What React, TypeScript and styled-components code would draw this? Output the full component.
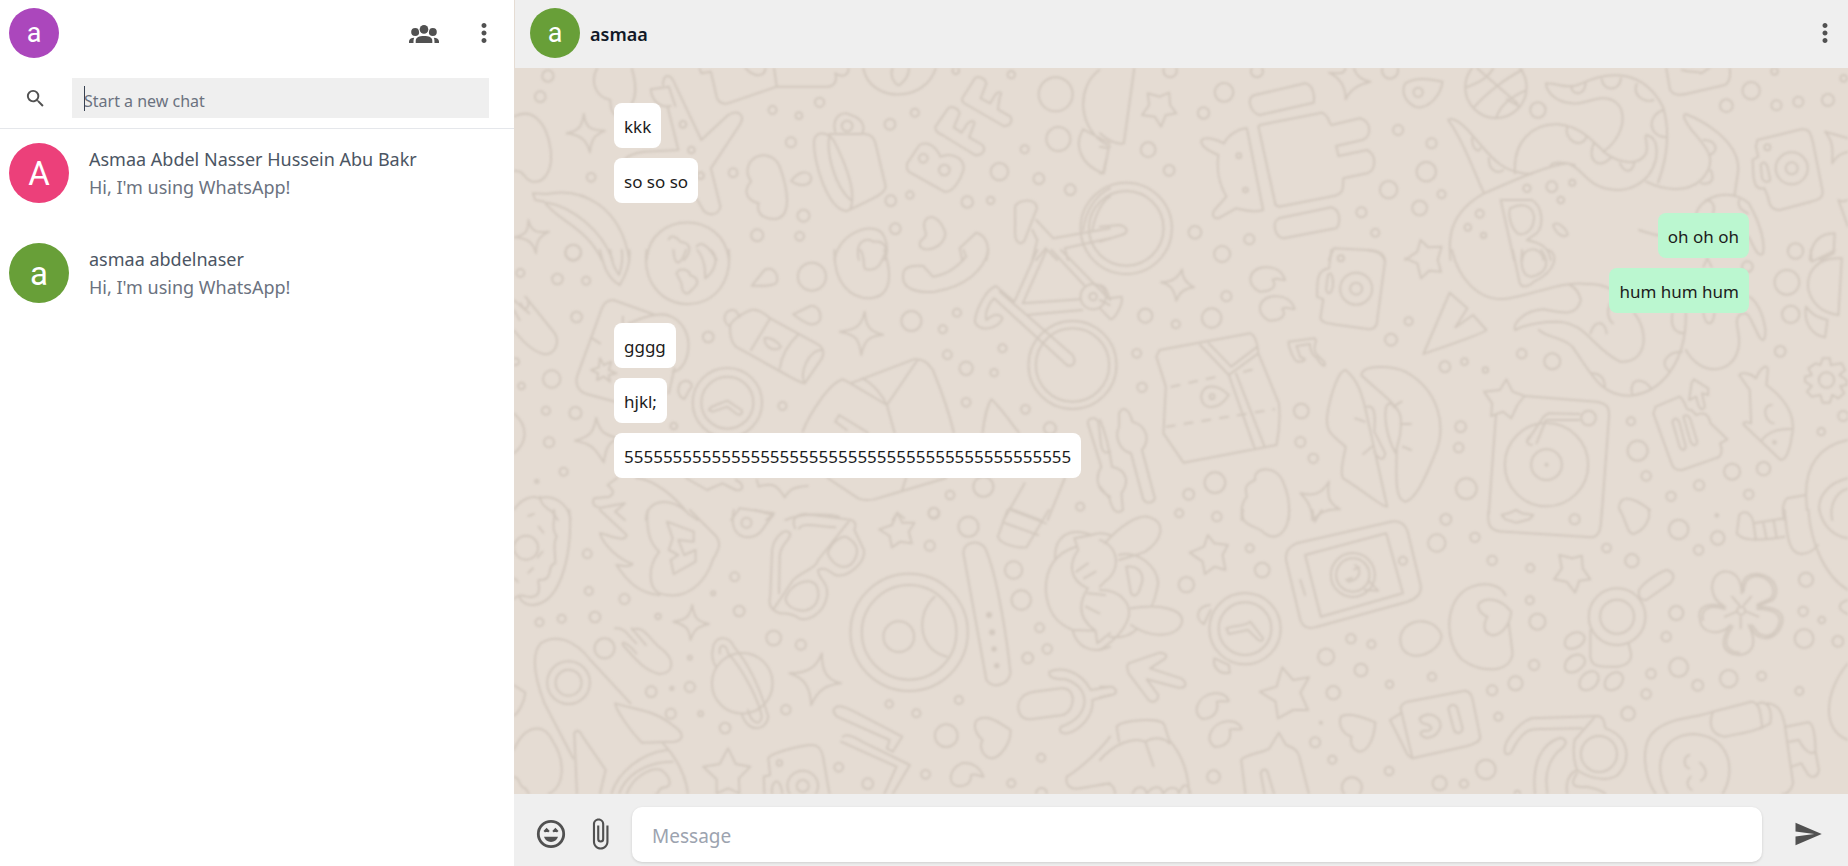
import React, { useId } from 'react';
import styled, { createGlobalStyle } from 'styled-components';
import { MdAttachFile, MdMoreVert, MdSearch, MdSend } from 'react-icons/md';

const GlobalStyle = createGlobalStyle`
  *, *::before, *::after { box-sizing: border-box; }
  body {
    margin: 0;
    font-family: 'Noto Sans', 'Open Sans', sans-serif;
    color: #111827;
    background: #ffffff;
  }
  h1, h2, p, ul { margin: 0; padding: 0; }
`;

const Page = styled.div`
  display: flex;
  height: 100vh;
  overflow: hidden;
`;

const Sidebar = styled.aside`
  flex: 0 0 514px;
  display: flex;
  flex-direction: column;
  background: #ffffff;
`;

const SidebarHeader = styled.header`
  display: flex;
  align-items: center;
  justify-content: space-between;
  height: 68px;
  padding: 8px 15px 10px 9px;
`;

const Actions = styled.div`
  display: flex;
  align-items: center;
  gap: 30px;
`;

const Avatar = styled.span<{ $size: number; $color: string }>`
  flex: none;
  display: flex;
  align-items: center;
  justify-content: center;
  width: ${(p) => p.$size}px;
  height: ${(p) => p.$size}px;
  border-radius: 50%;
  background: ${(p) => p.$color};
  color: #ffffff;
  font-family: Roboto, sans-serif;
  font-weight: 400;
  font-size: ${(p) => (p.$size > 50 ? 33 : 27)}px;
  line-height: 1;
`;

const IconButton = styled.button`
  flex: none;
  display: flex;
  padding: 0;
  border: 0;
  background: none;
  color: #515151;
  cursor: pointer;
`;

const SearchForm = styled.form`
  display: flex;
  align-items: center;
  padding: 10px 25px 10px 24px;
  border-bottom: 1px solid #e5e7eb;
`;

const SearchField = styled.div`
  position: relative;
  flex: 1;
  min-width: 0;
  display: flex;
  margin-left: 25px;
  &::before {
    content: '';
    position: absolute;
    left: 12px;
    top: 8px;
    width: 1px;
    height: 25px;
    background: #374151;
  }
`;

const SearchInput = styled.input`
  flex: 1;
  min-width: 0;
  height: 40px;
  padding: 5px 12px 0;
  border: 0;
  outline: 0;
  background: #efefef;
  color: #374151;
  caret-color: transparent;
  font: 16px 'Noto Sans', 'Open Sans', sans-serif;
  &::placeholder { color: #6b7280; opacity: 1; }
`;

const ContactList = styled.ul`
  list-style: none;
`;

const Contact = styled.li`
  display: flex;
  align-items: center;
  gap: 20px;
  height: 100px;
  padding: 0 9px 12px;
`;

const ContactName = styled.h2`
  font-size: 18px;
  line-height: 28px;
  font-weight: 400;
  color: #4b5563;
`;

const ContactStatus = styled.p`
  font-size: 18px;
  line-height: 28px;
  color: #6b7280;
`;

const Chat = styled.main`
  flex: 1;
  min-width: 0;
  display: flex;
  flex-direction: column;
  background: #e5dcd3;
`;

const ChatHeader = styled.header`
  display: flex;
  align-items: center;
  gap: 10px;
  height: 68px;
  margin-left: 1px;
  padding: 0 8px 2px 15px;
  background: #efefef;
`;

const ChatTitle = styled.h1`
  flex: 1;
  padding-top: 2px;
  font-size: 18px;
  line-height: 28px;
  font-weight: 600;
`;

const Thread = styled.section`
  position: relative;
  flex: 1;
  min-height: 0;
  overflow: hidden;
`;

const Wallpaper = styled.svg`
  position: absolute;
  inset: 0;
  width: 100%;
  height: 100%;
  fill: none;
  stroke: #d3c9bf;
  stroke-width: 2;
  stroke-linejoin: round;
  stroke-linecap: round;
  filter: blur(1px);
`;

const Messages = styled.ul`
  position: relative;
  display: flex;
  flex-direction: column;
  gap: 10px;
  padding: 35px 99px 35px 100px;
  list-style: none;
`;

const Bubble = styled.li<{ $mine?: boolean }>`
  align-self: ${(p) => (p.$mine ? 'flex-end' : 'flex-start')};
  padding: 10px 10px 7px;
  border-radius: 8px;
  background: ${(p) => (p.$mine ? '#bbf7d0' : '#ffffff')};
  color: #1c1c1c;
  font-size: 17px;
  line-height: 28px;
`;

const Composer = styled.form`
  display: flex;
  align-items: center;
  padding: 8px 25px 0 20px;
  height: 72px;
  background: #efefef;
`;

const AttachButton = styled(IconButton)`
  margin: 0 15px;
`;

const MessageInput = styled.input`
  flex: 1;
  min-width: 0;
  height: 55px;
  margin: 9px 31px 8px 0;
  padding: 2px 20px 0;
  border: 0;
  border-radius: 10px;
  outline: 0;
  background: #ffffff;
  box-shadow: 0 1px 3px rgba(0, 0, 0, 0.14);
  color: #111827;
  font: 19px 'Noto Sans', 'Open Sans', sans-serif;
  &::placeholder { color: #9ca3af; opacity: 1; }
`;

function GroupIcon() {
  return (
    <svg width="30" height="30" viewBox="0 0 30 30" fill="currentColor" aria-hidden="true">
      <circle cx="6.2" cy="14" r="4" />
      <circle cx="23.8" cy="14" r="4" />
      <circle cx="15" cy="11.4" r="5.4" fill="#ffffff" />
      <circle cx="15" cy="11.4" r="4.3" />
      <path d="M6.7 25v-2.2C6.7 19.4 10.4 18 15 18s8.3 1.4 8.3 4.8V25z" />
      <path d="M0 25v-1.6c0-2.3 2.1-3.6 5.2-3.7C4.6 21 4.5 22.2 4.5 25zM30 25v-1.6c0-2.3-2.1-3.6-5.2-3.7.6 1.3.7 2.5.7 5.3z" />
    </svg>
  );
}

function LaughIcon() {
  return (
    <svg width="34" height="34" viewBox="0 0 34 34" fill="currentColor" aria-hidden="true">
      <circle cx="17" cy="17" r="12.7" fill="none" stroke="currentColor" strokeWidth="2.8" />
      <path d="M10 19.8h14c-.9 3-3.6 5.1-7 5.1s-6.1-2.1-7-5.1z" />
      <path
        d="M10.3 14.8l2.3-2.4 2.3 2.4M19.1 14.8l2.3-2.4 2.3 2.4"
        fill="none"
        stroke="currentColor"
        strokeWidth="2.2"
      />
    </svg>
  );
}

type Dot = [number, number, number];

interface Tile {
  x: number;
  y: number;
  sx: number;
  sy: number;
  rings: Dot[];
  lines: string;
  dashes?: string;
}

// The doodle wallpaper, split in six tiles that each have their own scale.
const tiles: Tile[] = [
  {
    x: 510, y: 0, sx: 2.6133, sy: 3,
    rings: [[99,228,21],[79,290,20],[452,373,14],[474,450,14],[212,532,17],[165,757,27],[686,330,16],[755,347,14],[809,307,18],[734,427,19],[583,518,17],[498,527,14],[1058,338,16],[993,373,20],[995,602,20],[1045,585,15],[767,647,22],[646,706,22],[757,709,17],[1007,686,20],[1345,448,16],[1279,515,30],[1382,536,20],[1464,569,20],[1195,606,21],[1256,601,15],[1310,224,15],[1426,283,55],[1433,417,40],[1165,212,14],[881,378,20],[1080,475,17],[1135,510,20]],
    lines: `M10 350C60 320 95 370 105 440C115 510 90 550 60 545C35 540 40 510 10 512
      M193 342C198 385 210 390 248 392C220 405 212 420 209 457C200 420 185 405 148 400C180 392 188 380 193 342Z
      M48 660C55 695 70 700 102 695C75 710 68 725 68 760C60 725 45 715 12 712C40 705 48 695 48 660Z
      M60 580L95 582C190 560 290 620 312 780M60 580L66 600L90 605C120 660 200 680 240 780M98 608C160 620 240 690 268 780
      M228 204C210 240 220 290 262 300C262 340 275 350 290 350M318 204C330 250 330 290 318 310
      M368 268L415 260L432 318M368 268C370 300 390 325 420 318M400 255C400 220 420 220 430 250L500 420L570 345C600 325 615 350 600 375L525 505L550 620C545 650 510 650 500 620L485 590M412 320L440 450L350 455C320 460 305 470 300 478
      M495 204L500 220L525 215L540 290C545 310 560 315 575 308L697 260L690 204M697 260H830C850 258 855 240 850 220C870 235 885 225 885 204M615 204C640 235 665 230 668 204
      M923 204C940 310 1085 310 1113 204M1000 204C990 230 1010 260 1018 255C1030 245 1045 225 1042 204
      M850 395C840 350 870 330 890 345C920 355 930 380 920 400C945 405 950 410 955 430L982 560C980 580 960 590 880 633C830 630 790 480 795 420C800 390 835 395 850 430C880 500 905 580 890 625M835 405C825 460 850 560 890 600M835 402H920
      M735 543C755 510 785 510 787 535C785 560 755 560 735 543Z
      M628 485C650 455 690 460 705 500C730 580 735 655 690 657C650 655 645 630 650 610C615 600 610 570 630 545C615 520 620 500 628 485Z
      M1215 235L1182 295C1180 305 1185 310 1195 315L1290 378C1305 380 1315 365 1308 350L1275 328L1280 290C1290 275 1275 270 1265 290L1255 310L1230 295L1245 250C1240 230 1220 228 1215 235Z
      M1145 325L1112 380C1110 395 1120 400 1130 405L1215 465C1235 468 1245 450 1235 435L1200 412L1212 375C1220 360 1200 358 1190 380L1180 398L1160 382L1175 340C1170 320 1150 318 1145 325Z
      M1070 435L1038 490C1035 510 1040 515 1050 520L1135 575C1160 580 1180 530 1185 510C1190 480 1160 455 1125 470C1110 430 1085 425 1070 435Z
      M1540 210C1480 260 1480 390 1568 440M1498 388L1568 430M1498 388C1475 430 1485 490 1550 520L1558 480
      M357 780C365 630 560 630 572 780M415 718C420 700 440 715 445 725C480 730 470 760 455 780M488 740C500 720 520 740 540 780
      M848 780C860 690 960 660 978 710C990 740 985 770 978 780M912 780C900 725 930 710 950 725C975 720 985 740 983 760
      M1090 655C1110 640 1130 670 1138 700C1135 740 1090 760 1072 740C1065 715 1090 720 1087 700C1080 680 1080 665 1090 655Z
      M1175 745L1218 698C1245 705 1255 740 1245 780M1175 745L1182 780
      M1320 620C1325 600 1375 590 1377 625L1345 720C1340 735 1320 735 1320 700ZM1375 660L1420 715L1568 685M1365 690L1378 720L1365 780M1450 745L1568 715M1450 745L1458 780M1400 745L1375 780M1400 745L1430 780M1498 690C1505 620 1540 580 1568 565M1522 690C1530 640 1550 600 1568 590`,
  },
  {
    x: 510, y: 250, sx: 2.6133, sy: 3,
    rings: [[165,8,28],[27,69,16],[124,87,20],[199,92,16],[174,201,20],[109,387,30],[30,408,14],[15,335,14],[94,482,16],[171,489,22],[102,577,19],[140,665,16],[70,694,9],[428,528,14],[518,261,20],[789,80,46],[712,468,16],[1049,213,34],[1131,238,16],[1168,188,16],[1287,295,16],[1143,314,17],[1192,355,24],[1265,368,15],[1192,457,17],[1347,478,17],[1411,535,22],[1237,710,34],[1150,735,17],[1107,788,19],[1490,770,16],[568,458,108],[568,458,82],[1524,140,15],[1524,140,42],[1470,345,136],[1470,345,114]],
    lines: `M235 0C245 50 255 85 287 105C305 70 315 30 312 0M262 0C265 40 275 60 285 75C292 50 295 20 292 0
      M357 0C345 100 400 162 465 162C540 160 580 90 572 0M427 0C430 50 445 50 460 0M435 70C445 50 470 60 470 75C495 85 495 100 475 120C460 140 450 130 448 100ZM490 0C510 30 510 60 510 85C540 60 545 20 525 0
      M632 107L665 60C690 45 705 80 695 100C680 110 660 108 632 107Z
      M740 193L785 168C805 165 815 190 810 210C795 235 770 220 740 193Z
      M848 0C845 100 890 145 940 145C1000 140 998 70 978 0M915 0C930 20 920 55 930 58C960 65 970 40 978 15
      M1028 70C1030 50 1050 45 1080 48L1105 80C1140 75 1170 50 1192 20L1185 0M1028 70C1020 115 1060 130 1110 125C1190 110 1240 60 1250 0
      M1378 0L1318 155L1270 108C1240 120 1215 190 1215 215C1225 250 1280 235 1287 205C1275 180 1250 205 1245 210C1240 190 1250 160 1265 145L1455 345C1475 355 1480 330 1470 315L1280 125M1402 0L1340 160L1490 148M1415 0L1500 105M1440 0L1568 150M1350 195L1495 180M1350 195L1400 245
      M927 185C930 230 940 245 975 254C935 258 925 275 918 315C912 265 905 255 862 245C905 240 920 225 927 185Z
      M575 230C575 215 600 195 625 182C640 175 660 185 680 205L800 280C820 290 822 310 815 325L770 400C750 395 740 385 700 360L590 290C575 270 575 250 575 230ZM575 230C550 215 560 170 590 182L600 200M680 205L630 300M752 255C725 285 710 315 705 355M815 300C780 300 755 370 770 400M665 265C680 260 700 275 708 290C700 305 665 300 665 265Z
      M40 140L110 240C135 270 120 315 90 313C60 305 30 270 10 240M45 145C55 165 40 195 28 160M10 180L25 210M10 150L50 190
      M270 150C255 150 245 160 240 175L175 380C170 405 180 425 200 432L290 460M270 150L380 195C440 180 490 260 455 340C445 360 435 365 425 365M380 195C340 200 320 220 310 219M430 354L415 430M295 200V220M215 265L235 280
      M235 325L245 345L265 335L258 360L278 370L258 375L262 395L245 380L228 390L230 370L212 360L232 352Z
      M10 490C50 530 45 580 10 610
      M225 503C235 545 245 555 285 565C255 575 250 600 245 637C225 600 215 580 170 572C210 560 220 545 225 503Z
      M445 400C460 385 475 395 475 410C460 430 460 445 455 447C440 440 435 420 445 400
      M520 480C520 470 540 465 568 452L605 480C610 490 600 500 590 490L568 470L530 485Z
      M765 545C775 510 830 400 870 388L890 400L1055 328C1085 325 1095 345 1105 360C1130 430 1150 500 1160 548M890 400L985 465L1065 330M985 465L1005 548M920 385C950 400 975 440 985 465M850 515L860 495L935 548M880 540L850 515M830 684L910 745C930 755 950 750 970 742L1140 684M1035 684L1025 720
      M1235 548C1240 500 1250 460 1258 448C1280 470 1310 520 1330 548
      M1568 605C1540 620 1545 570 1538 520C1535 500 1510 500 1510 520L1545 650C1530 680 1530 720 1568 740
      M280 684L255 705C270 720 275 730 260 740L220 745C210 765 230 780 250 770L300 760L275 785L300 810M330 684C380 690 430 740 465 790M355 810C355 750 420 735 465 790L490 810
      M460 684L515 720L555 700L590 720C615 725 610 700 590 690M645 690L650 710C690 695 700 710 718 742C730 720 740 710 778 708
      M10 780C30 745 60 735 75 745C120 730 155 770 158 810M78 740C80 760 90 770 110 785L125 810
      M578 810L600 775L690 790L670 810M720 810C760 790 830 790 860 800M1000 810L1012 788L1030 805M1305 775L1385 810M1345 700L1290 810M1450 684L1405 810`,
  },
  {
    x: 510, y: 510, sx: 2.6133, sy: 3,
    rings: [[202,131,17],[206,243,16],[299,267,19],[135,326,16],[77,337,16],[222,321,20],[247,415,34],[387,319,12],[587,200,17],[531,250,10],[599,303,20],[689,384,26],[760,404,19],[369,545,20],[423,535,9],[470,531,19],[470,443,10],[420,611,19],[498,611,11],[562,654,20],[721,599,18],[1097,107,19],[1108,10,20],[1198,50,34],[1316,180,30],[1336,270,33],[1384,353,17],[1404,417,18],[1353,444,20],[991,582,15],[1062,610,16],[1173,570,16],[1140,677,38],[1388,743,16],[1310,820,16],[1086,793,17],[935,821,20],[859,772,17],[704,759,12],[1389,850,20],[1252,315,10],[1260,367,10],[1265,417,9],[1272,467,9],[1252,315,4],[1260,367,4],[1265,417,4],[1272,467,4],[153,518,68],[153,518,43],[1043,367,180],[1043,367,146],[1016,380,50],[42,113,40],[618,38,19],[607,520,95],[765,828,50],[765,828,22]],
    lines: `M155 0C165 100 140 280 60 285C40 285 30 275 25 262M115 0C120 30 105 50 122 80C110 100 120 130 118 160C95 165 115 210 80 210C65 205 85 240 70 255C50 275 30 240 10 268
      M75 50L87 68M85 125L72 142M60 175L48 188M12 205L20 215M62 12L48 18
      M235 0L305 75C300 100 260 75 235 70C245 110 290 150 320 162C310 175 290 165 278 165C310 220 340 250 390 255
      M360 0C355 60 365 100 390 125C360 170 360 230 390 250C460 275 510 220 530 150C550 110 550 100 540 80L470 0M410 35L480 65V95L440 90L455 135L485 120V155L428 192L420 150L440 135L415 120L425 85Z
      M585 0C575 50 590 80 620 82C660 80 660 50 688 15L640 0
      M745 55C735 30 745 15 770 12L880 28C905 30 905 45 900 60L925 120C930 160 880 205 850 195C830 180 820 170 805 180C805 210 835 215 828 260C820 310 780 335 755 325C740 310 720 310 705 310C680 300 675 280 680 260L685 120C690 80 720 50 732 70C735 90 705 100 705 140L703 250M690 295L740 210C770 180 800 175 805 150L885 35M755 55C765 40 780 45 850 52M720 265C735 220 780 200 800 225C815 260 800 300 765 302C740 300 720 285 720 265ZM830 130C840 95 870 70 885 85C905 100 915 120 900 150C885 180 850 180 830 130Z
      M1012 8L1025 38L1057 38L1042 65L1050 100L1020 95L998 112L992 78L965 58L998 45Z
      M1300 0L1275 80C1280 100 1320 115 1350 112L1408 0M1310 0L1400 40M1290 38L1380 75
      M1425 150C1420 80 1460 50 1520 75C1540 65 1555 70 1568 75M1480 110C1420 130 1400 180 1400 240C1405 310 1430 340 1470 360L1530 362M1520 75L1475 85L1485 120C1460 160 1460 210 1510 235C1480 290 1490 330 1530 362L1535 400L1568 370M1470 360C1480 410 1520 435 1568 410M1480 185L1510 160M1500 205L1530 185M1510 250L1555 255M1505 290L1540 310
      M476 285C482 325 490 335 520 342C490 350 480 360 472 390C468 355 460 345 427 335C460 330 470 320 476 285Z
      M1185 130C1185 90 1230 90 1242 115C1275 200 1300 400 1308 490C1300 530 1260 535 1245 510L1185 130Z
      M1110 260C1060 310 1065 420 1142 440
      M275 355C300 350 310 380 330 400M295 405C290 390 310 400 330 430M320 360C350 340 370 400 400 420C430 450 430 490 390 492C350 480 330 450 295 405M318 355L355 405
      M315 580L210 450C170 390 120 370 80 400C50 440 70 520 90 580L165 745M275 580C275 600 320 670 345 698L430 695C455 690 455 670 430 650C380 600 330 600 275 580ZM175 852L168 670C175 655 185 665 190 680L250 780L235 852M400 700C440 750 460 800 465 852M265 852C280 790 340 730 410 720M285 852C300 800 350 755 425 755M305 852C320 800 370 770 395 780C420 800 425 830 405 832C380 835 395 852 380 852
      M530 420C530 380 570 370 585 410C630 470 660 560 675 620C670 665 620 670 605 610M548 430C545 400 565 400 570 430C610 480 650 570 658 620C655 650 630 640 622 600M530 420C525 440 535 470 540 470
      M815 430C815 480 825 510 865 520C825 525 805 540 787 585C785 540 775 505 730 490C775 490 800 475 815 430Z
      M1220 630C1250 610 1280 640 1308 660C1310 700 1280 745 1258 745C1235 740 1225 710 1235 690C1215 670 1210 645 1220 630Z
      M848 595C860 580 880 595 900 605L1025 680L1000 725L985 715L992 690L855 620C845 610 845 600 848 595ZM870 680C880 668 900 680 920 695L1045 765L1000 852M865 695L1010 770L978 852
      M1340 560C1320 580 1325 630 1360 628L1445 615C1480 600 1480 530 1440 535L1370 545C1355 548 1345 552 1340 560ZM1410 485C1440 470 1490 480 1518 540L1568 530M1410 485C1405 505 1430 508 1450 508C1520 530 1520 620 1440 650C1430 670 1450 675 1470 665C1510 640 1525 600 1522 570L1568 555
      M1455 800C1470 790 1530 740 1568 680M1455 800C1450 830 1470 840 1490 835L1568 820
      M1180 760C1150 775 1140 820 1170 828C1200 830 1205 810 1205 795C1215 790 1230 800 1237 800C1230 775 1210 755 1180 760Z
      M570 715L590 762L628 770L598 805L600 850L570 835L540 850V808L505 770L548 762Z
      M665 852L663 800L680 795L675 745C680 730 760 705 790 705C810 705 815 725 818 740L835 852M685 852C680 815 705 790 712 852
      M10 525L40 548C38 580 20 610 10 618M10 720C40 640 90 640 110 690C145 750 145 830 100 852M10 800C30 805 20 830 40 835L50 852`,
  },
  {
    x: 1100, y: 510, sx: 2.0963, sy: 3,
    rings: [[166,10,16],[245,20,18],[314,115,16],[340,180,26],[181,224,27],[725,28,20],[706,99,30],[786,82,18],[822,151,18],[902,174,16],[1115,152,24],[1062,114,17],[1255,120,18],[1213,58,33],[1295,84,24],[1480,209,25],[995,28,19],[917,335,28],[901,271,16],[1208,309,25],[1187,380,18],[1474,304,18],[1513,330,14],[1476,386,32],[1547,394,20],[1213,472,32],[1155,491,18],[1253,526,20],[1318,506,30],[1387,498,17],[1466,543,16],[526,386,18],[569,403,16],[474,440,28],[547,480,23],[489,548,24],[696,500,16],[607,523,15],[910,465,19],[822,541,19],[871,520,25],[1145,552,18],[1107,611,24],[835,620,16],[451,697,19],[463,638,7],[487,749,16],[606,783,17],[238,800,23],[528,832,34],[809,778,33],[712,820,25],[763,821,16],[875,850,12],[635,152,16],[304,356,111],[304,356,83],[1084,320,89],[1084,320,55],[1046,732,58],[530,195,70],[530,195,54],[1344,302,16]],
    lines: `M10 100C40 50 80 10 105 22C140 40 130 90 95 125C80 135 60 140 40 150M0 90C40 110 45 180 10 215L0 230M40 135C80 120 120 170 122 220C115 270 110 290 105 290M55 170C85 165 95 200 85 230C80 260 70 260 65 250ZM0 240C50 240 65 290 60 320C50 370 20 400 0 420M65 295C130 280 175 300 172 335C165 380 110 390 65 345M20 380C40 385 60 380 75 360
      M226 75L240 100L268 105L257 135L263 180L240 170L220 192L215 155L188 128L218 110Z
      M300 0C290 50 330 45 345 70C370 95 395 70 397 0M445 0L450 35L465 0
      M412 100L610 35C630 30 640 45 645 65L672 225C675 250 665 265 645 275L455 350C435 360 425 350 420 330L390 150C388 125 395 110 412 100ZM430 135L600 70L635 250L463 320ZM420 210L430 255M565 215L583 242L555 240M520 215C545 210 550 180 535 165M516 210L528 204M533 178L543 172
      M265 355C280 345 305 350 315 335L342 385C340 400 330 390 325 380L310 360L270 372ZM230 285C200 290 200 330 218 342L232 300M240 445C235 470 250 495 272 488L270 465Z
      M630 380C635 340 670 320 700 345C720 370 720 385 705 410C680 450 625 450 630 380Z
      M850 255C840 225 810 215 780 230C720 260 720 400 760 450C800 490 860 490 865 430L857 340M795 280C810 260 840 265 862 305C860 345 840 380 820 375C800 365 805 340 812 320C795 310 790 290 795 280Z
      M963 135L990 145L1010 137L1012 175L1028 208L1005 212L996 248L978 215L952 208L968 175Z
      M1130 240C1140 215 1180 180 1190 180C1205 190 1205 205 1195 220L1145 270C1130 270 1128 255 1130 240ZM1028 360V440C1030 470 1045 472 1085 470C1110 465 1115 445 1113 430L1108 400
      M975 405C972 380 990 365 1003 367C1018 372 1020 390 1008 405C995 420 978 420 975 405ZM975 475C972 450 990 432 1005 434C1020 442 1020 460 1008 475C995 492 978 492 975 475ZM1005 525C1005 500 1020 482 1035 484C1048 490 1048 510 1038 528C1025 545 1008 545 1005 525ZM1058 525C1058 500 1073 485 1085 487C1098 492 1100 510 1090 528C1078 545 1060 545 1058 525Z
      M1345 250C1345 215 1350 190 1380 192C1420 200 1425 250 1410 270L1378 290C1420 290 1435 310 1430 340C1420 385 1395 395 1375 375L1360 345C1375 390 1375 430 1340 435C1300 430 1300 390 1322 345C1300 380 1260 370 1258 330C1250 290 1275 275 1310 290C1275 265 1275 200 1305 185C1335 180 1345 215 1345 250Z
      M1349 245C1351 218 1356 198 1380 198C1412 206 1418 250 1405 266L1378 284M1378 297C1415 297 1428 315 1424 340C1415 378 1398 385 1380 370L1366 345M1340 428C1308 424 1306 390 1326 350M1264 330C1258 295 1280 283 1310 297
      M1325 260L1340 285M1365 260L1350 285M1310 320L1335 305M1380 320L1355 305M1343 320V355
      M1340 15C1350 0 1365 5 1370 40L1435 25M1340 15L1335 70C1345 90 1370 95 1435 80M1370 40L1375 90M1390 35L1397 85M1412 30L1418 80M1435 0C1440 60 1440 130 1470 132C1490 130 1500 115 1505 105M1485 0C1490 100 1520 200 1568 240M1508 0C1515 50 1540 80 1568 85
      M815 0C810 50 820 65 850 65L1030 82C1050 80 1050 50 1052 0M842 15L860 8L872 0L885 10L908 15L900 28L872 38L850 28Z
      M1090 0C1105 40 1105 70 1118 72C1145 60 1155 20 1150 0
      M60 460L125 428C145 430 140 445 130 452L105 475L170 505C185 520 180 535 165 533L98 508L122 555C122 575 110 580 102 570L60 490C57 475 55 468 60 460ZM0 530L25 530C38 540 35 552 25 555L0 562
      M382 472L405 510L438 502L420 548L436 600L405 600L373 625L368 575L335 545L370 530Z
      M240 550C205 555 190 610 215 627C245 625 248 595 245 575C255 570 265 578 270 572C265 555 255 548 240 550Z
      M267 634C232 639 217 694 242 711C272 709 275 679 272 659C282 654 292 662 297 656C292 639 282 632 267 634Z
      M505 620C520 605 550 620 577 637C575 690 560 725 543 725C525 715 525 695 527 680C505 670 500 640 505 620Z
      M645 575L765 542C778 545 780 560 782 575L797 680C798 695 785 702 770 708L655 745L630 595C632 582 638 578 645 575ZM630 610L608 630L645 735L655 745M670 625C690 600 715 620 714 650C705 690 675 690 672 670C675 655 690 670 695 655C690 635 672 650 670 625ZM730 595C735 580 748 582 750 600L760 655C758 675 745 670 742 660Z
      M35 650C40 630 130 620 135 645L145 690C170 730 185 780 187 852M35 650L40 695M0 750C30 700 70 680 95 695C120 675 140 690 145 700M95 695L112 768M0 825C25 815 30 830 32 852M68 852C75 825 95 825 98 852C110 825 130 825 132 852C145 825 165 830 165 852C175 815 185 820 190 852
      M305 852L296 750C300 735 350 725 355 715L375 668L390 705C410 715 415 725 418 740L438 852M345 852L337 790C340 775 350 775 352 790L365 852
      M850 730C840 700 880 635 905 625L1045 618C1060 625 1055 640 1060 655C1110 680 1115 750 1085 795C1060 820 1020 800 1000 780C970 800 980 852 980 852M850 730C860 740 865 720 870 705C890 660 900 655 930 657L1010 655M1035 625L995 690C990 730 995 760 1000 780M912 852C905 760 925 700 965 683C985 690 975 710 960 725C930 770 935 820 938 852M1000 790C985 820 990 835 1020 830C1040 835 1055 845 1060 852
      M1165 852C1140 800 1130 700 1165 660C1200 620 1250 625 1285 605L1365 575C1380 575 1385 600 1388 650C1375 665 1340 670 1310 680C1280 675 1275 640 1285 605M1380 580C1400 570 1410 600 1405 640L1385 655M1400 580C1425 585 1430 610 1435 640L1453 820C1450 840 1440 852 1430 852M1190 852C1160 780 1170 675 1245 672C1320 680 1335 780 1305 852M1235 735C1220 745 1225 770 1235 775M1258 758C1275 780 1272 800 1260 812M1238 800C1225 820 1235 835 1240 840M1438 650L1485 637C1500 640 1500 720 1500 725C1490 735 1478 725 1465 690L1445 695M1450 770L1470 760L1485 795C1495 805 1505 800 1507 780L1500 725
      M1568 460C1520 540 1510 660 1568 690M1568 270C1545 280 1545 300 1568 312`,
  },
  {
    x: 1100, y: 0, sx: 2.0963, sy: 3,
    rings: [[147,212,24],[329,214,22],[260,277,32],[217,339,21],[101,449,26],[145,511,20],[199,697,23],[313,718,19],[608,212,28],[667,277,18],[918,330,27],[625,390,19],[695,430,19],[684,515,33],[605,569,30],[670,624,26],[716,583,16],[548,637,19],[577,698,16],[796,641,16],[895,565,15],[947,560,20],[990,548,13],[966,600,14],[771,682,14],[804,706,12],[1313,317,23],[1365,272,30],[1414,214,14],[1418,316,19],[1464,305,19],[1526,300,22],[1559,235,14],[1399,442,13],[1450,505,52],[1450,505,22],[1458,753,27],[291,467,11],[305,570,11],[55,685,141],[55,685,116],[830,262,96]],
    lines: `M72 204L50 430C35 435 15 420 0 400M0 440L18 445L8 520H0M0 680L40 675C60 680 60 700 45 705L0 725
      M100 280L125 290L145 278L147 315L160 340L138 345L128 380L115 350L88 345L103 315Z
      M325 285L430 250C448 255 450 290 448 308L335 345C315 340 305 290 325 285ZM335 375L465 338C480 345 478 365 485 375L545 355C570 365 570 410 550 420L495 438L500 468L560 450C580 465 580 510 560 520L510 535C510 570 510 580 490 588L375 620L368 615L332 380ZM375 655L485 622C505 630 505 670 495 685L385 715C365 710 360 665 375 655ZM308 385L342 630C320 640 300 630 285 625L248 655C235 655 235 640 240 630L265 590C245 540 245 500 248 465C215 445 210 430 213 420C220 410 240 415 260 430C270 400 295 385 308 385Z
      M480 218C500 220 512 225 515 204M480 218C505 235 515 260 515 298C525 265 545 252 567 245C545 240 535 220 532 204
      M640 250C665 230 690 238 718 245C715 285 690 325 665 322C640 310 630 275 640 250Z
      M790 204L875 310M768 262C800 245 815 230 825 204M785 320C810 280 850 235 885 210M830 355C840 310 870 285 892 272M853 298L880 320
      M805 580C780 500 760 420 730 360C740 350 760 370 780 405C820 470 840 520 905 522M870 520C865 420 910 370 960 373C1010 380 1030 420 1060 460C1090 490 1130 500 1145 460C1150 430 1140 410 1145 405C1165 410 1170 440 1165 480C1150 560 1100 575 1070 568C1020 560 1010 500 980 490C930 500 870 540 805 580C730 640 730 720 735 780M1055 455C1110 400 1110 290 1050 295C1020 300 1010 315 990 310C950 305 935 270 935 250C960 250 980 270 1010 250C1070 210 1140 210 1180 320C1195 390 1190 470 1170 548M945 495C950 485 970 485 995 495M988 262C990 285 1015 290 1018 250M1052 238C1055 275 1090 275 1092 235M1125 252C1115 290 1145 310 1160 300M1180 330C1145 350 1150 410 1188 412M980 378C970 420 1010 450 1020 410M1035 430C1020 480 1045 510 1070 475M1090 490C1100 520 1115 520 1120 490M780 415C780 450 795 460 797 445M815 475C815 520 840 520 845 510M1145 545C1180 570 1230 580 1260 540C1300 480 1270 440 1240 390C1225 360 1220 345 1228 342C1260 360 1340 420 1338 510L1330 588M1265 420C1290 420 1300 450 1278 465M1280 510C1290 540 1280 555 1260 550M1250 640C1260 590 1320 560 1360 610C1380 660 1395 720 1390 760C1380 775 1370 740 1360 710M1270 600C1285 600 1290 620 1285 640M1340 600C1335 620 1345 630 1358 640M1130 690C1150 700 1160 705 1172 706
      M840 600L905 600C930 620 930 680 915 700L895 720C925 730 940 740 945 780M840 600L868 780M860 625C880 610 905 610 910 650C910 690 890 710 875 700C860 680 855 640 860 625ZM885 780C885 740 925 735 930 780M950 675C960 660 980 690 980 705C970 715 955 700 950 675Z
      M1187 204L1195 270C1205 290 1220 285 1235 280L1310 255C1322 245 1322 225 1320 204M1220 210C1240 220 1250 210 1260 220L1278 204
      M1378 420L1470 388C1490 385 1490 405 1495 430L1515 575C1515 595 1505 600 1490 605L1425 630C1405 630 1403 610 1400 590L1393 565C1375 570 1372 550 1370 530L1368 480L1380 470L1375 440ZM1385 495C1390 480 1398 490 1400 505L1405 540C1400 550 1390 545 1388 535Z
      M1520 395L1568 415M1520 395C1540 430 1535 460 1535 490C1545 465 1555 460 1568 455
      M1548 600C1560 610 1565 600 1568 600M1548 600L1568 680M1540 700C1500 700 1490 740 1488 780M1540 700L1538 760L1510 780
      M480 780L490 745L560 750C585 755 590 760 597 780M640 780L665 755L672 720L688 742L716 740L708 780`,
  },
  {
    x: 1100, y: 250, sx: 2.0963, sy: 3,
    rings: [[256,12,28],[265,139,19],[95,197,25],[159,223,16],[234,204,33],[505,25,13],[537,116,52],[537,116,22],[647,214,16],[610,269,22],[723,350,20],[764,335,14],[808,360,12],[884,311,18],[948,334,28],[77,310,17],[88,412,18],[235,440,11],[422,483,26],[420,576,19],[447,625,18],[756,530,20],[752,593,18],[768,716,35],[241,698,35],[186,733,20],[1113,514,16],[1127,602,34],[1145,678,18],[1325,665,28],[1391,656,24],[1256,706,19],[1197,739,18],[1360,733,18],[1293,796,8],[1426,304,20],[1440,97,41],[1448,193,30],[1523,390,27],[1512,545,15],[1558,498,19],[1357,50,20],[1024,504,26],[1414,577,8],[936,644,129],[936,644,50],[936,644,5]],
    lines: `M172 58C172 85 180 100 197 112C175 115 165 130 160 152C155 120 150 105 128 97C155 95 165 80 172 58Z
      M0 105C15 110 15 130 20 145L45 140C50 160 30 210 22 208L0 175M0 150L20 165
      M345 52C310 55 305 105 335 125C365 125 370 105 362 90C370 80 380 92 388 90C382 62 365 50 345 52Z
      M365 139C330 142 325 192 355 212C385 212 390 192 382 177C390 167 400 179 408 177C402 149 385 137 365 139Z
      M485 0L480 55C455 60 455 90 455 140L468 148L462 205C465 220 480 220 500 225L565 238C585 235 580 210 583 190L597 40C600 10 580 0 560 0M478 75C485 60 490 85 488 110C485 135 475 135 474 115Z
      M640 25L665 40L673 85L690 62L715 65L708 30
      M733 128L770 175L745 232L782 195L810 240C808 250 680 310 678 312Z
      M125 300L315 250C325 255 330 280 332 310L375 460C378 500 375 550 370 585L175 638L133 550L138 410L118 320ZM210 285L270 375L325 598M228 280L275 350L330 290M270 375L332 310M285 370L345 590M212 440C215 400 245 400 270 435C250 480 215 485 212 440Z
      M395 275C395 285 405 335 415 335C430 335 435 325 420 322L412 288L440 282C440 300 445 315 455 325C465 350 475 355 470 335L455 315C440 290 460 275 450 265L395 275
      M515 360C540 390 550 430 560 500L602 770C590 770 570 740 510 685C500 670 515 600 515 590C480 550 470 540 478 480C485 430 500 360 515 360ZM548 375C550 345 610 345 640 365C710 420 730 530 700 620C680 690 660 750 640 755C620 750 620 700 622 600M548 375C570 410 625 460 630 500C635 560 622 580 620 610C600 560 595 500 600 470C605 455 615 460 620 475M560 470C575 465 578 490 575 545L598 610C595 635 585 630 575 605M535 505L555 515M552 612L570 590M615 470L632 455M630 522H652M635 590L652 600
      M40 490C45 470 60 470 68 515C100 530 105 570 88 600L115 745C110 762 95 762 90 745L65 610C40 600 30 560 40 530ZM0 510C15 560 20 600 25 650C60 660 60 700 45 730L48 780C35 795 25 780 20 745L0 710
      M325 690C320 650 370 640 385 700C400 750 397 790 395 810M325 690C300 705 305 720 308 740C295 760 297 780 297 810
      M480 695C475 740 480 760 503 778C475 775 455 790 450 810M480 695C465 730 450 740 420 730C435 750 445 780 445 810
      M738 0C750 80 790 150 845 147C900 140 970 90 1020 102C1050 100 1070 115 1080 125M870 240C865 220 890 180 930 178C970 190 1000 200 1008 150C1005 130 1000 115 985 105M870 240C890 225 920 215 960 215C1020 220 1030 290 1090 335C1150 340 1150 240 1120 190M920 240C940 265 970 260 990 290C1030 370 1050 440 1110 437C1180 430 1230 330 1228 190M1028 250C1040 200 1060 220 1062 250M1090 145C1060 150 1060 200 1075 220M1200 190C1195 230 1205 250 1225 250M1220 305C1190 305 1170 340 1195 365M1115 430C1110 380 1140 385 1155 415M1030 370C1050 370 1060 390 1058 410M1228 300C1260 380 1320 370 1335 310C1350 260 1325 220 1340 195C1360 180 1360 200 1375 240C1390 290 1395 270 1395 240C1390 190 1380 160 1362 140M1265 190C1270 230 1285 230 1288 190M1265 50L1273 25L1282 50
      M865 0L880 100C885 115 900 110 910 95C960 60 960 10 940 0M885 0C880 60 890 80 905 80C935 70 945 40 925 0
      M852 388L865 425L890 438L875 465L862 505L845 485L820 498L822 460L805 425L838 420ZM890 438L1040 455C1065 460 1068 475 1067 500L1052 790M830 495L815 790M895 575L930 500L940 490L1005 492M905 585C890 580 895 570 900 560M915 580L935 510L1005 510
      M1165 470L1215 440C1230 455 1225 485 1240 480L1250 495C1265 485 1275 490 1280 520L1315 568L1300 580C1305 600 1305 620 1290 625L1220 660C1205 662 1200 650 1198 640L1160 490ZM1240 400L1245 388L1275 415V435L1262 430L1268 470C1262 485 1255 480 1250 440L1235 450ZM1200 515C1205 500 1212 505 1215 520L1228 590C1225 605 1218 600 1215 590ZM1223 500C1230 490 1236 500 1238 510L1252 575C1250 590 1242 588 1238 575Z
      M1340 375C1345 365 1365 370 1375 385C1385 350 1400 340 1400 360L1397 405C1440 450 1460 500 1450 560C1445 610 1435 635 1425 628L1350 525C1345 510 1365 520 1365 520L1362 420ZM1388 570C1400 545 1425 535 1450 537M1408 465C1385 465 1395 520 1412 520
      M1555 25C1500 20 1480 70 1485 120C1495 170 1520 190 1548 195ZM1480 170C1490 190 1500 200 1525 210L1520 262C1490 255 1475 215 1480 170ZM1490 0L1492 35C1515 20 1530 10 1540 0
      M1510 345L1515 325H1530L1532 345L1555 340L1562 360L1550 375L1565 390V405L1552 408L1560 430L1548 445L1535 435L1530 458H1515L1510 435L1492 440L1482 425L1492 408L1478 395V380L1492 375L1485 355L1500 340Z
      M1568 570C1500 590 1480 660 1480 735L1482 780M1480 735L1440 745C1430 760 1430 790 1435 810M1568 685C1520 700 1505 750 1508 780M1568 715C1535 730 1530 780 1535 810
      M1095 750C1110 735 1140 765 1153 780M1095 750C1085 765 1088 775 1090 782`,
    dashes: 'M150 410L245 380M302 365L330 355M140 530L365 478',
  },
];

function Doodles() {
  return (
    <Wallpaper viewBox="514 68 1334 726" preserveAspectRatio="xMinYMin slice" aria-hidden="true">
      {tiles.map((t) => (
        <g key={`${t.x}-${t.y}`} transform={`translate(${t.x} ${t.y}) scale(${1 / t.sx} ${1 / t.sy})`}>
          <path d={t.lines} vectorEffect="non-scaling-stroke" />
          {t.dashes && <path d={t.dashes} vectorEffect="non-scaling-stroke" strokeDasharray="8 10" />}
          {t.rings.map(([cx, cy, outer]) => {
            const r = Math.max(outer - 4, 3);
            return (
              <ellipse
                key={`${cx}-${cy}-${outer}`}
                cx={cx}
                cy={cy}
                rx={(r * t.sx) / t.sy}
                ry={r}
                vectorEffect="non-scaling-stroke"
              />
            );
          })}
        </g>
      ))}
    </Wallpaper>
  );
}

const contacts = [
  { name: 'Asmaa Abdel Nasser Hussein Abu Bakr', initial: 'A', color: '#ec407a' },
  { name: 'asmaa abdelnaser', initial: 'a', color: '#689f38' },
];

const messages = [
  { text: 'kkk' },
  { text: 'so so so' },
  { text: 'oh oh oh', mine: true },
  { text: 'hum hum hum', mine: true },
  { text: 'gggg' },
  { text: 'hjkl;' },
  { text: '5'.repeat(46) },
];

export default function App() {
  const searchId = useId();
  return (
    <Page>
      <GlobalStyle />
      <Sidebar>
        <SidebarHeader>
          <Avatar $size={50} $color="#ab47bc">a</Avatar>
          <Actions>
            <IconButton type="button" aria-label="Groups"><GroupIcon /></IconButton>
            <IconButton type="button" aria-label="Menu"><MdMoreVert size={30} /></IconButton>
          </Actions>
        </SidebarHeader>
        <SearchForm onSubmit={(e) => e.preventDefault()}>
          <IconButton as="label" htmlFor={searchId} aria-label="Search"><MdSearch size={23} /></IconButton>
          <SearchField>
            <SearchInput id={searchId} type="text" placeholder="Start a new chat" autoFocus />
          </SearchField>
        </SearchForm>
        <ContactList>
          {contacts.map((c) => (
            <Contact key={c.name}>
              <Avatar $size={60} $color={c.color}>{c.initial}</Avatar>
              <div>
                <ContactName>{c.name}</ContactName>
                <ContactStatus>Hi, I'm using WhatsApp!</ContactStatus>
              </div>
            </Contact>
          ))}
        </ContactList>
      </Sidebar>
      <Chat>
        <ChatHeader>
          <Avatar $size={50} $color="#689f38">a</Avatar>
          <ChatTitle>asmaa</ChatTitle>
          <IconButton type="button" aria-label="Chat menu"><MdMoreVert size={30} /></IconButton>
        </ChatHeader>
        <Thread>
          <Doodles />
          <Messages>
            {messages.map((m) => (
              <Bubble key={m.text} $mine={m.mine}>{m.text}</Bubble>
            ))}
          </Messages>
        </Thread>
        <Composer onSubmit={(e) => e.preventDefault()}>
          <IconButton type="button" aria-label="Emoji"><LaughIcon /></IconButton>
          <AttachButton type="button" aria-label="Attach file"><MdAttachFile size={34} /></AttachButton>
          <MessageInput type="text" placeholder="Message" aria-label="Message" />
          <IconButton type="submit" aria-label="Send"><MdSend size={30} /></IconButton>
        </Composer>
      </Chat>
    </Page>
  );
}
